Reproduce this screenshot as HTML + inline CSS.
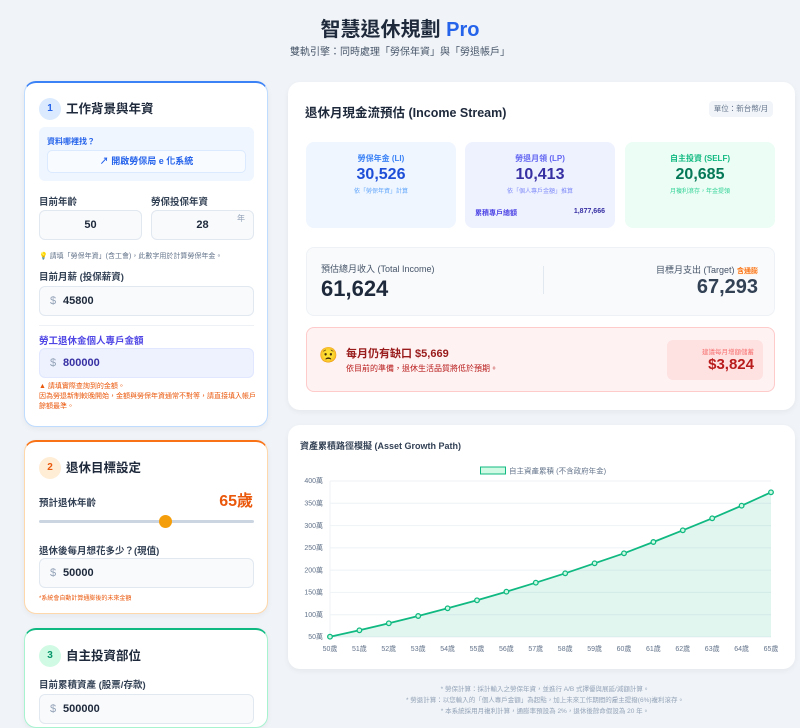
<!DOCTYPE html>
<html><head><meta charset="utf-8"><style>
*{box-sizing:border-box;margin:0;padding:0}
body{width:800px;height:716px;overflow:hidden;background:#f0f4f8;font-family:"Liberation Sans","Noto Sans CJK TC",sans-serif;color:#1e293b;position:relative}
.a{position:absolute}
.card{position:absolute;background:#fff;border-radius:12px;box-shadow:0 2px 6px rgba(0,0,0,.05)}
.num{display:inline-block;width:22px;height:22px;border-radius:50%;text-align:center;line-height:22px;font-size:10px;font-weight:bold}
.h{font-size:12.5px;font-weight:bold;color:#1e293b;line-height:22px}
.lbl{font-size:9.5px;font-weight:bold;color:#334155}
.inp{position:absolute;background:#f8fafc;border:1px solid #e2e8f0;border-radius:6px;font-size:11px;font-weight:bold;color:#1e293b}
.inp .d{color:#94a3b8;font-weight:normal;position:absolute;left:10px;top:0}
</style></head><body>
<div class="a" style="left:0;width:800px;top:13px;text-align:center;font-size:20px;font-weight:bold;color:#1e293b">智慧退休規劃 <span style="color:#2563eb">Pro</span></div>
<div class="a" style="left:0;width:800px;top:43px;text-align:center;font-size:10px;color:#475569">雙軌引擎：同時處理「勞保年資」與「勞退帳戶」</div>

<!-- card 1 -->
<div class="card" style="left:24px;top:81px;width:244px;height:346px;border:1px solid #bfdbfe;border-top:2px solid #3b82f6">
 <span class="num a" style="left:14px;top:15px;background:#dbeafe;color:#2563eb">1</span>
 <div class="a h" style="left:41px;top:15px">工作背景與年資</div>
 <div class="a" style="left:14px;top:44px;width:215px;height:54px;background:#eff6ff;border-radius:6px">
  <div class="a" style="left:8px;top:9px;font-size:8px;color:#2563eb;font-weight:bold">資料哪裡找？</div>
  <div class="a" style="left:8px;top:23px;width:199px;height:23px;background:#f8fbff;border:1px solid #dbeafe;border-radius:5px;text-align:center;line-height:21px;font-size:9px;color:#2563eb;font-weight:bold">↗ 開啟勞保局 e 化系統</div>
 </div>
 <div class="a lbl" style="left:14px;top:111px">目前年齡</div>
 <div class="a lbl" style="left:126px;top:111px">勞保投保年資</div>
 <div class="inp" style="left:14px;top:127px;width:103px;height:30px;text-align:center;line-height:28px">50</div>
 <div class="inp" style="left:126px;top:127px;width:103px;height:30px;text-align:center;line-height:28px">28<span style="position:absolute;right:8px;top:-6px;font-size:8px;color:#94a3b8;font-weight:normal">年</span></div>
 <div class="a" style="left:14px;top:168px;font-size:7px;color:#64748b"><span style="color:#eab308">💡</span> 請填「勞保年資」(含工會)，此數字用於計算勞保年金。</div>
 <div class="a lbl" style="left:14px;top:186px">目前月薪 (投保薪資)</div>
 <div class="inp" style="left:14px;top:203px;width:215px;height:30px;line-height:28px"><span class="d">$</span><span style="position:absolute;left:23px">45800</span></div>
 <div class="a" style="left:14px;top:242px;width:215px;border-top:1px solid #eef2f6"></div>
 <div class="a lbl" style="left:14px;top:250px;color:#4f46e5">勞工退休金個人專戶金額</div>
 <div class="inp" style="left:14px;top:265px;width:215px;height:30px;line-height:28px;background:#eef2ff;border-color:#e0e7ff;color:#3730a3"><span class="d">$</span><span style="position:absolute;left:23px">800000</span></div>
 <div class="a" style="left:14px;top:299px;font-size:7px;line-height:10px;color:#ea580c;width:220px">▲ 請填實際查詢到的金額。<br>因為勞退新制較晚開始，金額與勞保年資通常不對等，請直接填入帳戶餘額最準。</div>
</div>

<!-- card 2 -->
<div class="card" style="left:24px;top:440px;width:244px;height:174px;border:1px solid #fed7aa;border-top:2px solid #f97316">
 <span class="num a" style="left:14px;top:15px;background:#ffedd5;color:#ea580c">2</span>
 <div class="a h" style="left:41px;top:15px">退休目標設定</div>
 <div class="a lbl" style="left:14px;top:53px">預計退休年齡</div>
 <div class="a" style="right:14px;top:45px;font-size:16px;font-weight:bold;color:#ea580c">65歲</div>
 <div class="a" style="left:14px;top:78px;width:215px;height:3px;background:#cbd5e1;border-radius:2px"></div>
 <div class="a" style="left:134px;top:73px;width:13px;height:13px;border-radius:50%;background:#f59e0b"></div>
 <div class="a lbl" style="left:14px;top:101px">退休後每月想花多少？(現值)</div>
 <div class="inp" style="left:14px;top:116px;width:215px;height:30px;line-height:28px"><span class="d">$</span><span style="position:absolute;left:23px">50000</span></div>
 <div class="a" style="left:14px;top:151px;font-size:6px;color:#ea580c">*系統會自動計算通膨後的未來金額</div>
</div>

<!-- card 3 -->
<div class="card" style="left:24px;top:628px;width:244px;height:100px;border:1px solid #a7f3d0;border-top:2px solid #10b981">
 <span class="num a" style="left:14px;top:15px;background:#d1fae5;color:#059669">3</span>
 <div class="a h" style="left:41px;top:15px">自主投資部位</div>
 <div class="a lbl" style="left:14px;top:47px">目前累積資產 (股票/存款)</div>
 <div class="inp" style="left:14px;top:64px;width:215px;height:30px;line-height:28px"><span class="d">$</span><span style="position:absolute;left:23px">500000</span></div>
</div>

<!-- right card 1 -->
<div class="card" style="left:288px;top:82px;width:507px;height:328px">
 <div class="a" style="left:17px;top:20px;font-size:12.5px;font-weight:bold;color:#1e293b">退休月現金流預估 (Income Stream)</div>
 <div class="a" style="left:421px;top:19px;width:64px;height:16px;background:#f1f5f9;border-radius:4px;font-size:7.5px;color:#64748b;text-align:center;line-height:16px">單位：新台幣/月</div>
 <div class="a" style="left:18px;top:60px;width:150px;height:86px;background:#eff6ff;border-radius:8px;text-align:center">
  <div style="margin-top:11px;font-size:8px;font-weight:bold;color:#3b82f6">勞保年金 (LI)</div>
  <div style="font-size:16px;font-weight:bold;color:#1d4ed8;margin-top:2px">30,526</div>
  <div style="font-size:6px;color:#60a5fa;margin-top:2px">依「勞保年資」計算</div>
 </div>
 <div class="a" style="left:177px;top:60px;width:150px;height:86px;background:#eef2ff;border-radius:8px;text-align:center">
  <div style="margin-top:11px;font-size:8px;font-weight:bold;color:#6366f1">勞退月領 (LP)</div>
  <div style="font-size:16px;font-weight:bold;color:#3730a3;margin-top:2px">10,413</div>
  <div style="font-size:6px;color:#818cf8;margin-top:2px">依「個人專戶金額」推算</div>
  <div class="a" style="left:10px;top:66px;font-size:7px;color:#4f46e5;font-weight:bold">累積專戶總額</div>
  <div class="a" style="right:10px;top:66px;font-size:7px;color:#3730a3;font-weight:bold">1,877,666</div>
 </div>
 <div class="a" style="left:337px;top:60px;width:150px;height:86px;background:#ecfdf5;border-radius:8px;text-align:center">
  <div style="margin-top:11px;font-size:8px;font-weight:bold;color:#10b981">自主投資 (SELF)</div>
  <div style="font-size:16px;font-weight:bold;color:#047857;margin-top:2px">20,685</div>
  <div style="font-size:6px;color:#34d399;margin-top:2px">月複利滾存，年金提領</div>
 </div>
 <div class="a" style="left:18px;top:165px;width:469px;height:69px;background:#f8fafc;border:1px solid #eef2f6;border-radius:8px">
  <div class="a" style="left:14px;top:14px;font-size:9px;color:#475569">預估總月收入 (Total Income)</div>
  <div class="a" style="left:14px;top:28px;font-size:22px;font-weight:bold;color:#1e293b">61,624</div>
  <div class="a" style="left:236px;top:18px;height:28px;border-left:1px solid #e2e8f0"></div>
  <div class="a" style="right:16px;top:15px;font-size:9px;color:#475569">目標月支出 (Target) <span style="font-size:7px;color:#f97316;font-weight:bold;background:#fff7ed">含通膨</span></div>
  <div class="a" style="right:16px;top:28px;font-size:20px;font-weight:bold;color:#334155">67,293</div>
 </div>
 <div class="a" style="left:18px;top:245px;width:469px;height:65px;background:#fef2f2;border:1px solid #fecaca;border-radius:8px">
  <div class="a" style="left:12px;top:18px;font-size:15px">😟</div>
  <div class="a" style="left:39px;top:17px;font-size:11px;font-weight:bold;color:#991b1b">每月仍有缺口 $5,669</div>
  <div class="a" style="left:39px;top:35px;font-size:8px;color:#b91c1c">依目前的準備，退休生活品質將低於預期。</div>
  <div class="a" style="left:360px;top:12px;width:96px;height:40px;background:#fee2e2;border-radius:6px;text-align:right;padding-right:9px">
   <div style="font-size:6.5px;color:#f87171;margin-top:6px">建議每月增額儲蓄</div>
   <div style="font-size:15px;font-weight:bold;color:#b91c1c">$3,824</div>
  </div>
 </div>
</div>

<!-- chart card -->
<div class="card" style="left:288px;top:425px;width:507px;height:244px">
 <div class="a" style="left:12px;top:14px;font-size:9px;font-weight:bold;color:#334155">資產累積路徑模擬 (Asset Growth Path)</div>
</div>
<svg class="a" style="left:0;top:0" width="800" height="716" font-family="Liberation Sans, Noto Sans CJK TC, sans-serif">
 <rect x="480.5" y="467" width="25" height="7" fill="#d1fae5" stroke="#10b981" stroke-width="1"/>
 <text x="509" y="473.5" font-size="7.5" fill="#64748b">自主資產累積 (不含政府年金)</text>
 <g stroke="#eef2f6" stroke-width="1">
  <line x1="330" x2="771" y1="481" y2="481"/><line x1="330" x2="771" y1="503.3" y2="503.3"/><line x1="330" x2="771" y1="525.6" y2="525.6"/><line x1="330" x2="771" y1="547.9" y2="547.9"/><line x1="330" x2="771" y1="570.1" y2="570.1"/><line x1="330" x2="771" y1="592.4" y2="592.4"/><line x1="330" x2="771" y1="614.7" y2="614.7"/><line x1="330" x2="771" y1="637" y2="637"/>
  <line x1="330" x2="330" y1="481" y2="637"/>
 </g>
 <g font-size="7" fill="#64748b" text-anchor="end">
  <text x="323" y="483">400萬</text><text x="323" y="505.5">350萬</text><text x="323" y="528">300萬</text><text x="323" y="550">250萬</text><text x="323" y="572.5">200萬</text><text x="323" y="594.5">150萬</text><text x="323" y="617">100萬</text><text x="323" y="639">50萬</text>
 </g>
 <g font-size="7" fill="#64748b" text-anchor="middle">
  <text x="330" y="651">50歲</text><text x="359.4" y="651">51歲</text><text x="388.8" y="651">52歲</text><text x="418.2" y="651">53歲</text><text x="447.6" y="651">54歲</text><text x="477" y="651">55歲</text><text x="506.4" y="651">56歲</text><text x="535.8" y="651">57歲</text><text x="565.2" y="651">58歲</text><text x="594.6" y="651">59歲</text><text x="624" y="651">60歲</text><text x="653.4" y="651">61歲</text><text x="682.8" y="651">62歲</text><text x="712.2" y="651">63歲</text><text x="741.6" y="651">64歲</text><text x="771" y="651">65歲</text>
 </g>
 <path d="M330,636.7 L359.4,630.3 388.8,623.3 418.2,616 447.6,608.3 477,600.3 506.4,591.7 535.8,582.7 565.2,573.3 594.6,563.3 624,553.3 653.4,542 682.8,530.3 712.2,518.3 741.6,505.7 771,492.3 L771,637 L330,637Z" fill="#10b981" fill-opacity="0.12"/>
 <polyline points="330,636.7 359.4,630.3 388.8,623.3 418.2,616 447.6,608.3 477,600.3 506.4,591.7 535.8,582.7 565.2,573.3 594.6,563.3 624,553.3 653.4,542 682.8,530.3 712.2,518.3 741.6,505.7 771,492.3" fill="none" stroke="#10b981" stroke-width="1.8"/>
 <g fill="#d1fae5" stroke="#10b981" stroke-width="1.3">
  <circle cx="330" cy="636.7" r="2.3"/><circle cx="359.4" cy="630.3" r="2.3"/><circle cx="388.8" cy="623.3" r="2.3"/><circle cx="418.2" cy="616" r="2.3"/><circle cx="447.6" cy="608.3" r="2.3"/><circle cx="477" cy="600.3" r="2.3"/><circle cx="506.4" cy="591.7" r="2.3"/><circle cx="535.8" cy="582.7" r="2.3"/><circle cx="565.2" cy="573.3" r="2.3"/><circle cx="594.6" cy="563.3" r="2.3"/><circle cx="624" cy="553.3" r="2.3"/><circle cx="653.4" cy="542" r="2.3"/><circle cx="682.8" cy="530.3" r="2.3"/><circle cx="712.2" cy="518.3" r="2.3"/><circle cx="741.6" cy="505.7" r="2.3"/><circle cx="771" cy="492.3" r="2.3"/>
 </g>
 <g font-size="6.5" fill="#94a3b8" text-anchor="middle">
  <text x="545" y="691">* 勞保計算：採計輸入之勞保年資，並進行 A/B 式擇優與展延/減額計算。</text>
  <text x="545" y="702">* 勞退計算：以您輸入的「個人專戶金額」為起點，加上未來工作期間的雇主提撥(6%)複利滾存。</text>
  <text x="545" y="713">* 本系統採用月複利計算，通膨率預設為 2%，退休後餘命假設為 20 年。</text>
 </g>
</svg>
</body></html>
